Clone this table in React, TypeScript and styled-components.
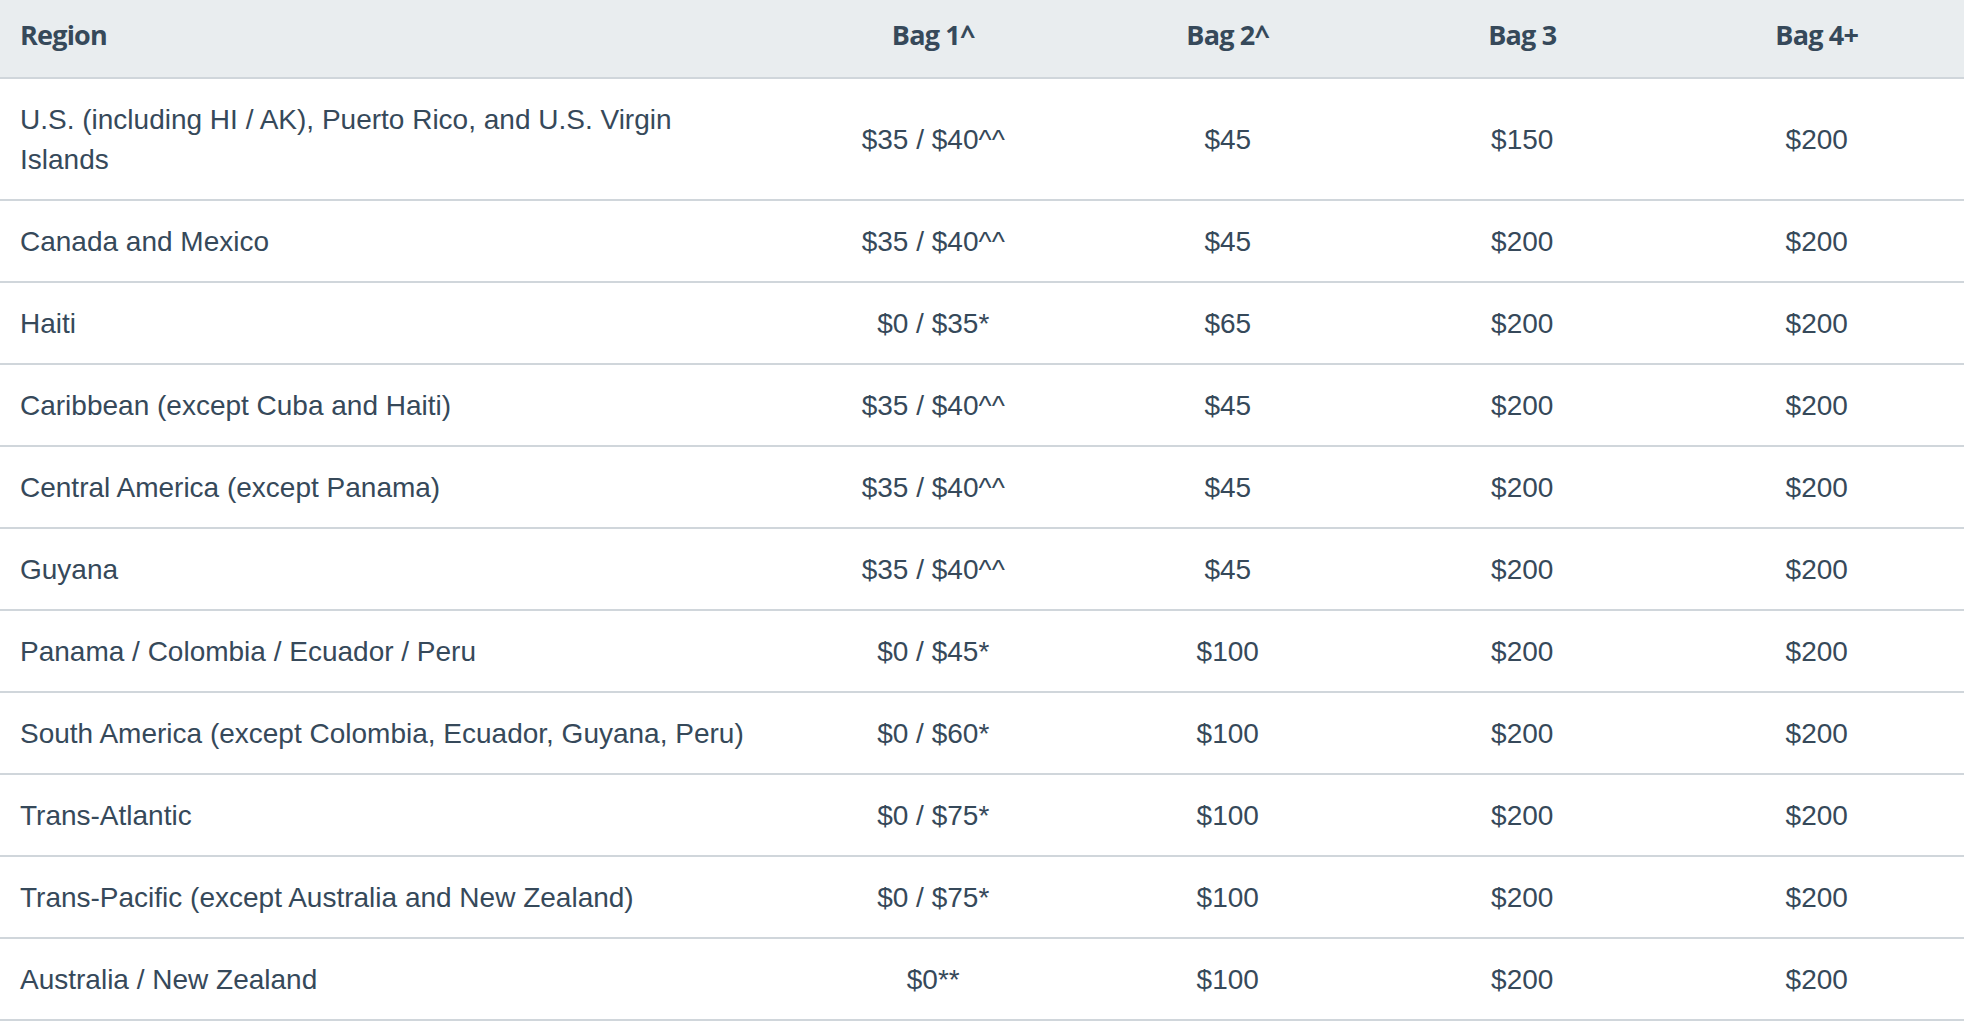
import styled, { createGlobalStyle } from 'styled-components';

const GlobalStyle = createGlobalStyle`
  html, body {
    margin: 0;
    padding: 0;
    background: #ffffff;
  }
`;

type Row = {
  region: string;
  fees: [string, string, string, string];
};

const headers = ['Bag 1^', 'Bag 2^', 'Bag 3', 'Bag 4+'];

const rows: Row[] = [
  {
    region: 'U.S. (including HI / AK), Puerto Rico, and U.S. Virgin Islands',
    fees: ['$35 / $40^^', '$45', '$150', '$200'],
  },
  { region: 'Canada and Mexico', fees: ['$35 / $40^^', '$45', '$200', '$200'] },
  { region: 'Haiti', fees: ['$0 / $35*', '$65', '$200', '$200'] },
  {
    region: 'Caribbean (except Cuba and Haiti)',
    fees: ['$35 / $40^^', '$45', '$200', '$200'],
  },
  {
    region: 'Central America (except Panama)',
    fees: ['$35 / $40^^', '$45', '$200', '$200'],
  },
  { region: 'Guyana', fees: ['$35 / $40^^', '$45', '$200', '$200'] },
  {
    region: 'Panama / Colombia / Ecuador / Peru',
    fees: ['$0 / $45*', '$100', '$200', '$200'],
  },
  {
    region: 'South America (except Colombia, Ecuador, Guyana, Peru)',
    fees: ['$0 / $60*', '$100', '$200', '$200'],
  },
  { region: 'Trans-Atlantic', fees: ['$0 / $75*', '$100', '$200', '$200'] },
  {
    region: 'Trans-Pacific (except Australia and New Zealand)',
    fees: ['$0 / $75*', '$100', '$200', '$200'],
  },
  { region: 'Australia / New Zealand', fees: ['$0**', '$100', '$200', '$200'] },
];

const App = () => {
  return (
    <>
      <GlobalStyle />
      <Table>
        <colgroup>
          <RegionCol />
          {headers.map((h) => (
            <col key={h} />
          ))}
        </colgroup>
        <thead>
          <tr>
            <HeadCell $align="left">Region</HeadCell>
            {headers.map((h) => (
              <HeadCell key={h} $align="center">
                {h}
              </HeadCell>
            ))}
          </tr>
        </thead>
        <tbody>
          {rows.map((row) => (
            <BodyRow key={row.region}>
              <RegionCell>{row.region}</RegionCell>
              {row.fees.map((fee, i) => (
                <FeeCell key={i}>{fee}</FeeCell>
              ))}
            </BodyRow>
          ))}
        </tbody>
      </Table>
    </>
  );
};

export default App;

const Table = styled.table`
  width: 1964px;
  table-layout: fixed;
  border-collapse: collapse;
  border-spacing: 0;
  color: #36495a;
`;

const RegionCol = styled.col`
  width: 786px;
`;

const HeadCell = styled.th<{ $align: 'left' | 'center' }>`
  box-sizing: border-box;
  height: 78px;
  padding: 0 20px 8px;
  background-color: #e9edef;
  border-bottom: 2px solid #d0d6db;
  font-family: 'Open Sans', 'Liberation Sans', sans-serif;
  font-weight: 700;
  font-size: 27px;
  letter-spacing: -0.8px;
  text-align: ${(p) => p.$align};
  vertical-align: middle;
`;

const BodyRow = styled.tr`
  border-bottom: 2px solid #d0d6db;
`;

const RegionCell = styled.td`
  padding: 21px 26px 19px 20px;
  font-family: 'Liberation Sans', Arial, sans-serif;
  font-size: 28px;
  line-height: 40px;
  text-align: left;
  vertical-align: middle;
`;

const FeeCell = styled(RegionCell)`
  padding: 21px 20px 19px;
  text-align: center;
`;
